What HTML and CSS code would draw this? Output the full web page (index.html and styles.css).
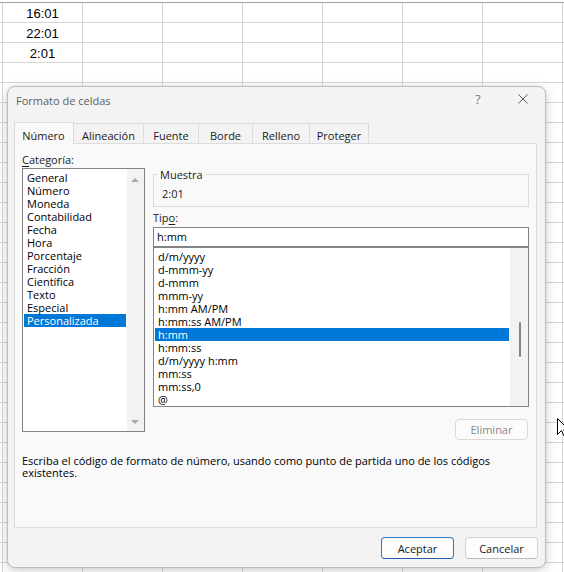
FILE: index.html
```html
<!DOCTYPE html>
<html lang="es">
<head>
<meta charset="utf-8">
<title>Formato de celdas</title>
<link rel="stylesheet" href="styles.css">
</head>
<body>
<div class="sheet">
  <div class="sheet-row"><div class="sheet-cell">16:01</div></div>
  <div class="sheet-row"><div class="sheet-cell">22:01</div></div>
  <div class="sheet-row"><div class="sheet-cell">2:01</div></div>
</div>

<div class="dialog">
  <div class="titlebar">
    <span class="title">Formato de celdas</span>
    <span class="tb-btn help">?</span>
    <span class="tb-btn close"><svg width="10" height="10" viewBox="0 0 10 10"><path d="M0.5 0.5L9.5 9.5M9.5 0.5L0.5 9.5" stroke="#5c5c5c" stroke-width="1" fill="none"/></svg></span>
  </div>

  <div class="tabs">
    <div class="tab tab-numero active">Número</div>
    <div class="tab tab-alineacion">Alineación</div>
    <div class="tab tab-fuente">Fuente</div>
    <div class="tab tab-borde">Borde</div>
    <div class="tab tab-relleno">Relleno</div>
    <div class="tab tab-proteger">Proteger</div>
  </div>

  <div class="panel">
    <div class="columns">
      <div class="col-left">
        <div class="label"><u>C</u>ategoría:</div>
        <div class="listbox cat-list">
          <ul class="items">
            <li>General</li>
            <li>Número</li>
            <li>Moneda</li>
            <li>Contabilidad</li>
            <li>Fecha</li>
            <li>Hora</li>
            <li>Porcentaje</li>
            <li>Fracción</li>
            <li>Científica</li>
            <li>Texto</li>
            <li>Especial</li>
            <li class="selected">Personalizada</li>
          </ul>
          <div class="vscroll arrows">
            <span class="arrow up"></span>
            <span class="arrow down"></span>
          </div>
        </div>
      </div>

      <div class="col-right">
        <fieldset class="sample">
          <legend>Muestra</legend>
          <div class="sample-value">2:01</div>
        </fieldset>
        <div class="label type-label">Tip<u>o</u>:</div>
        <div class="textbox">h:mm</div>
        <div class="listbox type-list">
          <ul class="items">
            <li>d/m/yyyy</li>
            <li>d-mmm-yy</li>
            <li>d-mmm</li>
            <li>mmm-yy</li>
            <li>h:mm AM/PM</li>
            <li>h:mm:ss AM/PM</li>
            <li class="selected">h:mm</li>
            <li>h:mm:ss</li>
            <li>d/m/yyyy h:mm</li>
            <li>mm:ss</li>
            <li>mm:ss,0</li>
            <li>@</li>
          </ul>
          <div class="vscroll thin">
            <span class="thumb"></span>
          </div>
        </div>
        <div class="delete-row">
          <button class="btn disabled">Eliminar</button>
        </div>
      </div>
    </div>
    <p class="desc">Escriba el código de formato de número, usando como punto de partida uno de los códigos existentes.</p>
  </div>

  <div class="footer">
    <button class="btn default">Aceptar</button>
    <button class="btn">Cancelar</button>
  </div>
</div>

<svg class="cursor" width="12" height="19" viewBox="0 0 12 19"><path d="M0.5 0.5L0.5 16.5L4.5 12.5L7 18L9.2 17L6.8 11.7L11.5 11.7Z" fill="#fff" stroke="#000" stroke-width="1" stroke-linejoin="round"/></svg>
</body>
</html>
```

FILE: styles.css
```css
html, body {
  margin: 0;
  padding: 0;
}

body {
  width: 564px;
  height: 572px;
  overflow: hidden;
  position: relative;
  background: #ffffff;
}

/* ---------- spreadsheet behind the dialog ---------- */
.sheet {
  height: 572px;
  box-sizing: border-box;
  margin-top: 2px;
  padding-top: 1px;
  border-top: 1px solid #a3a3a3;
  background-color: #fff;
  background-image:
    linear-gradient(to right, #d6d6d6 1px, transparent 1px),
    linear-gradient(to bottom, #d6d6d6 1px, transparent 1px);
  background-size: 80px 20px;
  background-position: 2px -1px;
  font-family: "Liberation Sans", Arial, sans-serif;
  font-size: 13px;
  color: #000;
}

.sheet-row {
  height: 20px;
  padding-left: 3px;
  display: flex;
  align-items: center;
}

.sheet-cell {
  width: 79px;
  text-align: center;
  line-height: 15px;
  padding-bottom: 1px;
}

/* ---------- dialog ---------- */
.dialog {
  position: absolute;
  left: 7px;
  top: 86px;
  width: 539px;
  height: 482px;
  box-sizing: border-box;
  border: 1px solid #bdbdbd;
  border-radius: 8px;
  background: #f3f3f3;
  box-shadow: 0 3px 12px rgba(0, 0, 0, 0.18), 0 0 3px rgba(0, 0, 0, 0.08);
  display: flex;
  flex-direction: column;
  font-family: "Open Sans", "Noto Sans", sans-serif;
  font-size: 11px;
  line-height: 13px;
  color: #1a1a1a;
}

.titlebar {
  height: 30px;
  flex: none;
  display: flex;
  align-items: center;
  padding-left: 8px;
  padding-bottom: 6px;
  box-sizing: border-box;
}

.title {
  color: #5f5f5f;
  font-size: 11px;
  padding-top: 2px;
}

.tb-btn {
  display: flex;
  align-items: center;
  justify-content: center;
  height: 24px;
}

.help {
  margin-left: auto;
  width: 46px;
  color: #7a7a7a;
  font-size: 12.5px;
}

.close {
  width: 44px;
}

/* ---------- tabs ---------- */
.tabs {
  flex: none;
  display: flex;
  align-items: flex-start;
  padding: 6px 0 0 7px;
  height: 20px;
  position: relative;
  z-index: 1;
}

.tab {
  box-sizing: border-box;
  height: 20px;
  padding: 5px 0 0;
  border: 1px solid #dcdcdc;
  border-bottom: none;
  margin-left: -1px;
  background: #f3f3f3;
  color: #1a1a1a;
  white-space: nowrap;
  text-align: center;
}

.tab-numero { width: 60px; }
.tab-alineacion { width: 71px; }
.tab-fuente { width: 56px; }
.tab-borde { width: 55px; }
.tab-relleno { width: 58px; }
.tab-proteger { width: 60px; }

.tab.active {
  height: 22px;
  margin-top: -1px;
  padding-top: 6px;
  padding-right: 1px;
  background: #f9f9f9;
}

/* ---------- panel ---------- */
.panel {
  flex: none;
  height: 385px;
  box-sizing: border-box;
  margin: 0 8px 0 6px;
  border: 1px solid #dcdcdc;
  background: #f9f9f9;
  padding: 9px 7px 0;
}

.columns {
  display: flex;
  gap: 8px;
}

.col-left {
  width: 123px;
  flex: none;
}

.col-right {
  flex: 1;
}

.label {
  color: #1a1a1a;
}

.label u {
  text-decoration-thickness: 1px;
  text-underline-offset: 2px;
}

.listbox {
  box-sizing: border-box;
  border: 1px solid #838383;
  background: #fff;
  display: flex;
  color: #000;
}

.cat-list {
  margin-top: 2px;
  height: 264px;
}

.items {
  list-style: none;
  margin: 0;
  padding: 2px 0 0;
  flex: 1;
}

.items li {
  margin: 0 1px;
  padding-left: 3px;
  height: 13px;
  white-space: nowrap;
}

.items li.selected {
  background: #0078d7;
  color: #fff;
}

.vscroll {
  width: 17px;
  flex: none;
  background: #f2f2f2;
  display: flex;
  flex-direction: column;
  align-items: center;
}

.arrows {
  justify-content: space-between;
  padding: 9px 2px 7px 0;
  box-sizing: border-box;
}

.arrow {
  width: 0;
  height: 0;
  border-left: 4px solid transparent;
  border-right: 4px solid transparent;
}

.arrow.up {
  border-bottom: 4px solid #a8a8a8;
}

.arrow.down {
  border-top: 4px solid #a8a8a8;
}

.thin {
  padding-left: 1px;
}

.thumb {
  width: 2px;
  height: 35px;
  margin-top: 74px;
  border-radius: 1px;
  background: #858585;
}

/* sample group */
.sample {
  margin: 15px 0 0;
  padding: 6px 8px 6px;
  border: 1px solid #dcdcdc;
  min-width: 0;
}

.sample legend {
  padding: 0 3px;
  margin-left: -5px;
  line-height: 13px;
}

.sample-value {
  line-height: 13px;
}

.type-label {
  margin-top: 4px;
}

.textbox {
  margin-top: 3px;
  height: 20px;
  box-sizing: border-box;
  border: 1px solid #838383;
  background: #fff;
  padding: 2px 3px 0;
  color: #000;
}

.type-list {
  height: 160px;
}

.delete-row {
  display: flex;
  justify-content: flex-end;
  margin-top: 12px;
  padding-right: 1px;
}

/* buttons */
.btn {
  box-sizing: border-box;
  height: 22px;
  width: 73px;
  padding: 0;
  margin: 0;
  border: 1px solid #d0d0d0;
  border-bottom-color: #bcbcbc;
  border-radius: 4px;
  background: #fdfdfd;
  font-family: "Open Sans", "Noto Sans", sans-serif;
  font-size: 11px;
  line-height: 13px;
  color: #1a1a1a;
}

.btn.disabled {
  height: 21px;
  color: #8a8a8a;
  border-color: #dadada;
  background: #fbfbfb;
}

.btn.default {
  border: 1px solid #2a77c8;
  border-bottom-color: #1d5fa8;
}

.desc {
  margin: 15px 0 0;
  line-height: 12px;
  color: #000;
}

.footer {
  flex: none;
  display: flex;
  justify-content: flex-end;
  gap: 11px;
  padding: 9px 7px 0 0;
}

/* mouse pointer over the sheet */
.cursor {
  position: absolute;
  left: 557px;
  top: 418px;
}
```
